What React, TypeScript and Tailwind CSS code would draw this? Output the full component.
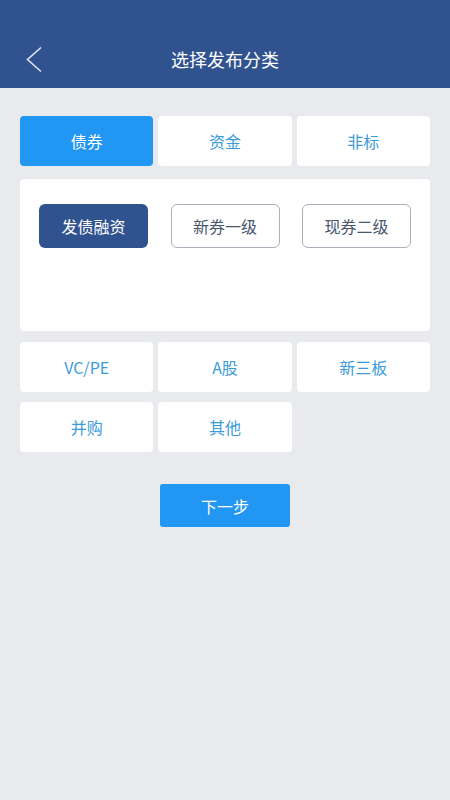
import { useState } from "react"

const tabs = ["债券", "资金", "非标"]
const subs = ["发债融资", "新券一级", "现券二级"]
const others = ["VC/PE", "A股", "新三板", "并购", "其他"]

export default function App() {
  const [tab, setTab] = useState(0)
  const [sub, setSub] = useState(0)

  return (
    <div
      className="min-h-[800px] w-[450px] bg-[#e9eaed]"
      style={{ fontFamily: '"Noto Sans CJK SC", "Noto Sans", sans-serif' }}
    >
      {/* header */}
      <div className="relative flex h-[88px] items-end justify-center bg-[#30528f] pb-[16px]">
        <button className="absolute left-[25px] top-[46px]">
          <svg width="18" height="27" viewBox="0 0 18 27" fill="none">
            <path d="M16 1.5 L2.5 13.5 L16 25.5" stroke="#dfe6f3" strokeWidth="1.6" />
          </svg>
        </button>
        <h1 className="text-[18px] leading-[26px] text-white">选择发布分类</h1>
      </div>

      <div className="px-[20px] pt-[28px]">
        <div className="grid grid-cols-3 gap-[5px]">
          {tabs.map((t, i) => (
            <button
              key={t}
              onClick={() => setTab(i)}
              className={
                i === tab
                  ? "h-[50px] rounded-[4px] bg-[#2196f3] text-[16px] text-white"
                  : "h-[50px] rounded-[4px] bg-white text-[16px] text-[#3b9bd9]"
              }
            >
              {t}
            </button>
          ))}
        </div>

        <div className="mt-[13px] h-[152px] rounded-[4px] bg-white px-[19px] pt-[25px]">
          <div className="flex justify-between">
            {subs.map((s, i) => (
              <button
                key={s}
                onClick={() => setSub(i)}
                className={
                  i === sub
                    ? "h-[44px] w-[109px] rounded-[6px] bg-[#30528f] text-[16px] text-white"
                    : "h-[44px] w-[109px] rounded-[6px] border border-[#a9b0bb] bg-white text-[16px] text-[#4a566e]"
                }
              >
                {s}
              </button>
            ))}
          </div>
        </div>

        <div className="mt-[11px] grid grid-cols-3 gap-x-[5px] gap-y-[10px]">
          {others.map((o) => (
            <button key={o} className="h-[50px] rounded-[4px] bg-white text-[16px] text-[#3b9bd9]">
              {o}
            </button>
          ))}
        </div>

        <div className="mt-[32px] flex justify-center">
          <button className="h-[43px] w-[130px] rounded-[3px] bg-[#2196f3] text-[16px] text-white">
            下一步
          </button>
        </div>
      </div>
    </div>
  )
}
